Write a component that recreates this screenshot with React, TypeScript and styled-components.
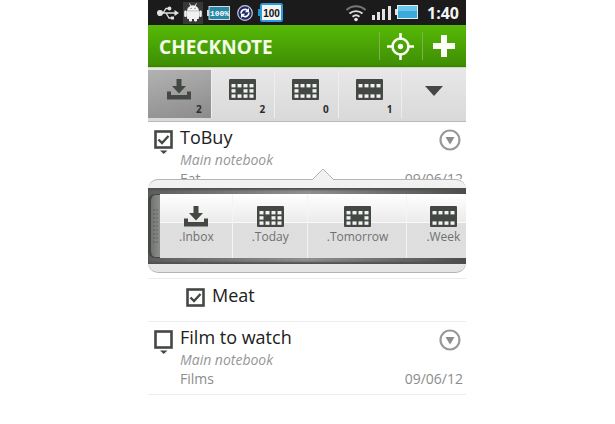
import React from 'react';
import styled, { createGlobalStyle } from 'styled-components';

const GlobalStyle = createGlobalStyle`
  * { box-sizing: border-box; }
  body { margin: 0; background: #fff; font-family: "Open Sans", "Noto Sans", sans-serif; }
  button { font: inherit; border: 0; padding: 0; background: none; color: inherit; }
  svg { display: block; flex: none; }
`;

const Screen = styled.main`
  margin: 0 149px 0 148px;
`;

const StatusBar = styled.div`
  display: flex;
  align-items: center;
  justify-content: space-between;
  height: 25px;
  padding: 0 7px 0 9px;
  background: #1b1b1b;
`;

const StatusGroup = styled.div<{ $gap: number }>`
  display: flex;
  align-items: center;
  gap: ${(p) => p.$gap}px;
`;

const Clock = styled.time`
  margin-left: 4px;
  font-size: 16px;
  line-height: 24px;
  font-weight: 700;
  color: #f4f4f4;
`;

const Header = styled.header`
  display: flex;
  align-items: center;
  height: 43px;
  padding: 0 8px 0 11px;
  background: linear-gradient(#57b906, #3f8f04 40px, #39780c);
  border-bottom: 1px solid #c4e2a8;
`;

const AppTitle = styled.h1`
  flex: 1;
  margin: 0;
  padding-top: 2px;
  font-family: "Noto Sans", "Open Sans", sans-serif;
  font-size: 19px;
  line-height: 24px;
  font-weight: 700;
  color: #f4fbe9;
`;

const HeaderButton = styled.button`
  display: flex;
  align-items: center;
  justify-content: flex-end;
  width: 43px;
  height: 28px;
  padding-right: 8px;
  border-left: 1px solid #7fb152;

  &:last-child {
    width: 36px;
    padding-right: 3px;
  }
`;

const TabBar = styled.nav`
  display: grid;
  grid-template-columns: repeat(5, 1fr);
  height: 54px;
  padding: 2px 0 3px;
  background: linear-gradient(#e9e7e9, #d9d9d9);
  border-bottom: 1px solid #bdb9bb;
`;

const Tab = styled.button<{ $active?: boolean }>`
  display: flex;
  flex-direction: column;
  align-items: center;
  justify-content: space-between;
  padding: 9px 9px 1px 8px;
  border-right: 1px solid #efedef;
  background: ${(p) => (p.$active ? 'linear-gradient(165deg, #b2b2b2, #8b8b8b)' : 'none')};

  &:last-child {
    padding-top: 16px;
    padding-right: 8px;
    border-right: 0;
  }
`;

const Count = styled.span`
  align-self: flex-end;
  font-size: 10px;
  line-height: 16px;
  font-weight: 700;
  color: #2c2c2c;
`;

const Note = styled.article<{ $clipped?: boolean }>`
  display: flex;
  height: ${(p) => (p.$clipped ? '57px' : '73px')};
  overflow: hidden;
  padding: 3px 3px 0 6px;
  border-bottom: ${(p) => (p.$clipped ? '0' : '1px solid #ececec')};
`;

const CheckLabel = styled.label`
  position: relative;
  width: 20px;
  height: 26px;
  margin-top: 5px;
`;

const CheckInput = styled.input`
  position: absolute;
  inset: 0;
  width: 20px;
  height: 20px;
  margin: 0;
  opacity: 0;
`;

const NoteBody = styled.div`
  flex: 1;
  min-width: 0;
  margin-left: 6px;
`;

const NoteTop = styled.div`
  display: flex;
  justify-content: space-between;
  align-items: flex-start;
  height: 25px;
`;

const NoteTitle = styled.h2`
  margin: 0;
  font-size: 18px;
  line-height: 24px;
  font-weight: 400;
  color: #202020;
`;

const Notebook = styled.p`
  margin: 0;
  font-size: 14px;
  line-height: 20px;
  font-style: italic;
  color: #979797;
`;

const NoteMeta = styled.div`
  display: flex;
  justify-content: space-between;
  font-size: 14px;
  line-height: 18px;
  color: #8c8c8c;
`;

const MoreButton = styled.button`
  height: 22px;
  margin: 4px 2px 0 0;
`;

const SubNote = styled.div`
  display: flex;
  gap: 6px;
  height: 43px;
  padding: 4px 0 0 38px;
  border-bottom: 1px solid #ececec;
`;

const Popup = styled.section`
  position: relative;
  height: 94px;
  padding: 8px 0;
  border: 1px solid #b4b4b4;
  border-width: 1px 0;
  border-radius: 10px;
  background: linear-gradient(#f2f2f2, #e4e4e4);
`;

const PopupArrow = styled.svg`
  position: absolute;
  top: -12px;
  left: 164px;
`;

const Drawer = styled.div`
  display: flex;
  height: 76px;
  padding: 6px 0;
  overflow: hidden;
  background: linear-gradient(90deg, #5c5f5c, #8f918f 50%, #4b4d4b);
  box-shadow: inset 0 2px 2px #4e514e, inset 0 -2px 2px #4e514e;
`;

const Handle = styled.button`
  flex: none;
  display: flex;
  align-items: center;
  justify-content: center;
  width: 12px;
  border: 1px solid #444744;
  border-left-width: 3px;
  border-right: 0;
  border-radius: 7px 0 0 7px;
  background: linear-gradient(90deg, #707370, #8c8f8c);
`;

const Tile = styled.button`
  flex: none;
  display: flex;
  flex-direction: column;
  align-items: center;
  gap: 1px;
  padding: 12px 18px 0 19px;
  border-right: 1px solid #f4f4f4;
  font-size: 12px;
  line-height: 18px;
  color: #707070;
  background: linear-gradient(#fff, #ebebeb 28px, #fafafa 28px, #fafafa 29px, #dedede 29px, #dfdfdf);
`;

const Gap = styled.div`
  height: 6px;
  border-bottom: 1px solid #ececec;
`;

const INK = '#444844';

function InboxIcon() {
  return (
    <svg width="24" height="21" viewBox="0 0 24 21" fill={INK} aria-hidden="true">
      <path d="M9.500 0h5v7h4.500L12 14.500 5 7h4.500z" />
      <path d="M0 12.500h4V16h16v-3.500h4V20.500H0z" />
    </svg>
  );
}

const CELLS = {
  today: [[0, 0], [1, 0], [2, 0], [3, 0], [0, 1], [2, 1], [3, 1], [0, 2], [1, 2], [2, 2], [3, 2]],
  tomorrow: [[0, 0], [1, 0], [2, 0], [3, 0], [0, 1], [3, 1], [0, 2], [1, 2], [2, 2], [3, 2]],
  week: [[0, 0], [1, 0], [2, 0], [3, 0], [0, 2], [1, 2], [2, 2], [3, 2]],
};

function CalendarIcon({ kind }: { kind: keyof typeof CELLS }) {
  return (
    <svg width="27" height="21" viewBox="0 0 27 21" aria-hidden="true">
      <rect width="27" height="21" rx="1" fill={INK} />
      {CELLS[kind].map(([x, y]) => (
        <rect key={`${x}-${y}`} x={2.5 + x * 6} y={5 + y * 5.2} width="4" height="3.4" fill="#f2f2f2" />
      ))}
    </svg>
  );
}

function StatusIcons() {
  return (
    <StatusGroup $gap={4}>
      <svg width="22" height="16" viewBox="0 0 22 16" fill="none" stroke="#e2e2e2" strokeWidth="1.3" aria-hidden="true">
        <path d="M3 8h15M6 8l3-4.500h3M9 8l3 5h3" />
        <circle cx="3" cy="8" r="2.400" fill="#e2e2e2" />
        <circle cx="12.500" cy="3.500" r="1.300" fill="#e2e2e2" />
        <path d="M17.500 5v6l4.500-3zM14 11.500h3v3h-3z" fill="#e2e2e2" stroke="none" />
      </svg>
      <svg width="20" height="22" viewBox="0 0 20 22" aria-hidden="true">
        <rect width="20" height="22" fill="#383838" />
        <g fill="#f1f1f1">
          <path d="M4 8.800a6 5.500 0 0 1 12 0v7.200a1 1 0 0 1-1 1H5a1 1 0 0 1-1-1z" />
          <rect x="1.200" y="8.500" width="2.600" height="6.500" rx="1.200" />
          <rect x="16.200" y="8.500" width="2.600" height="6.500" rx="1.200" />
          <rect x="6" y="15" width="3" height="4.500" rx="1.200" />
          <rect x="11" y="15" width="3" height="4.500" rx="1.200" />
        </g>
        <path d="M6.500 1.500l1.500 2.500M13.500 1.500L12 4" stroke="#f1f1f1" />
        <path d="M4 8.900h12" stroke="#a8a8a8" strokeWidth=".7" />
        <circle cx="8" cy="6.300" r=".6" fill="#555" />
        <circle cx="12" cy="6.300" r=".6" fill="#555" />
      </svg>
      <svg width="23" height="16" viewBox="0 0 23 16">
        <path d="M0 5h2v6H0z" fill="#c8d8dc" />
        <rect x="2" y="1.500" width="20.500" height="13" fill="#2789a8" stroke="#d4dadc" />
        <text x="12.500" y="11" textAnchor="middle" fontFamily="Liberation Mono, monospace" fontWeight="700" fontSize="8" fill="#fff">100%</text>
      </svg>
      <svg width="20" height="16" viewBox="0 0 20 16" aria-hidden="true">
        <circle cx="11" cy="8" r="7.300" fill="#20286a" stroke="#c7c9dc" strokeWidth="1.200" />
        <path d="M7 8.500a4 4 0 0 1 6.500-3.200M15 7.500a4 4 0 0 1-6.500 3.200" fill="none" stroke="#fff" strokeWidth="1.700" />
        <path d="M15 3v4.200h-4.200zM7 13V8.800h4.200z" fill="#fff" />
      </svg>
      <svg width="25" height="19" viewBox="0 0 25 19">
        <path d="M0 6h3v7H0z" fill="#2496d8" />
        <rect x="3" y="1" width="21" height="17" rx="1.500" fill="#f4f4f4" stroke="#2b9be0" strokeWidth="2" />
        <text x="13.500" y="13.500" textAnchor="middle" fontFamily="Liberation Sans, sans-serif" fontWeight="700" fontSize="10" fill="#111">100</text>
      </svg>
    </StatusGroup>
  );
}

function SignalIcons() {
  return (
    <StatusGroup $gap={5}>
      <svg width="22" height="18" viewBox="0 0 22 18" fill="none" strokeWidth="1.900" aria-hidden="true">
        <path d="M1.500 6a14 14 0 0 1 19 0" stroke="#777" />
        <path d="M4.500 9.500a10 10 0 0 1 13 0M7.500 12.800a5.500 5.500 0 0 1 7 0" stroke="#e0e0e0" />
        <circle cx="11" cy="15.500" r="1.800" fill="#e8e8e8" />
      </svg>
      <svg width="46" height="16" viewBox="0 0 46 16" aria-hidden="true">
        <path d="M0 10h3v5H0zM5 7h3v8H5zM10 4h3v11h-3zM16 1h3v14h-3z" fill="#e2e2e2" />
        <path d="M23 4h3v6h-3z" fill="#e2e2e2" />
        <rect x="25.500" y=".5" width="20" height="13" fill="#3aa9dc" stroke="#e4eef2" />
        <path d="M26 1h19v5H26z" fill="#6cc6ec" />
      </svg>
      <Clock>1:40</Clock>
    </StatusGroup>
  );
}

function CheckBox({ label, checked, pointer }: { label: string; checked?: boolean; pointer?: boolean }) {
  return (
    <CheckLabel>
      <CheckInput type="checkbox" defaultChecked={checked} aria-label={label} />
      <svg width="20" height="26" viewBox="0 0 20 26" fill="none" aria-hidden="true">
        <rect x="1.500" y="1.500" width="16" height="16" stroke={INK} strokeWidth="2.600" />
        {checked && <path d="M4.500 9.500l3.500 3.500L14.500 6" stroke={INK} strokeWidth="2.400" />}
        {pointer && <path d="M6 20.500h7.500L9.700 24z" fill={INK} />}
      </svg>
    </CheckLabel>
  );
}

interface NoteProps {
  title: string;
  text: string;
  checked?: boolean;
  clipped?: boolean;
}

function NoteRow({ title, text, checked, clipped }: NoteProps) {
  return (
    <Note $clipped={clipped}>
      <CheckBox label={title} checked={checked} pointer />
      <NoteBody>
        <NoteTop>
          <NoteTitle>{title}</NoteTitle>
          <MoreButton aria-label={`More about ${title}`}>
            <svg width="22" height="22" viewBox="0 0 22 22" aria-hidden="true">
              <circle cx="11" cy="11" r="9.500" fill="none" stroke="#999" strokeWidth="2.200" />
              <path d="M6.500 8h9L11 15.500z" fill="#8c8c8c" />
            </svg>
          </MoreButton>
        </NoteTop>
        <Notebook>Main notebook</Notebook>
        <NoteMeta>
          <span>{text}</span>
          <time>09/06/12</time>
        </NoteMeta>
      </NoteBody>
    </Note>
  );
}

export default function App() {
  return (
    <>
      <GlobalStyle />
      <Screen>
        <StatusBar>
          <StatusIcons />
          <SignalIcons />
        </StatusBar>
        <Header>
          <AppTitle>CHECKNOTE</AppTitle>
          <HeaderButton aria-label="Locate">
            <svg width="27" height="27" viewBox="0 0 27 27" fill="none" stroke="#fbfff5" strokeWidth="2.600" aria-hidden="true">
              <circle cx="13.500" cy="13.500" r="8" />
              <path d="M13.500 0v7M13.500 20v7M0 13.500h7M20 13.500h7" />
              <circle cx="13.500" cy="13.500" r="2.700" fill="#fbfff5" stroke="none" />
            </svg>
          </HeaderButton>
          <HeaderButton aria-label="Add note">
            <svg width="22" height="22" viewBox="0 0 22 22" aria-hidden="true">
              <path d="M8 0h6v8h8v6h-8v8H8v-8H0V8h8z" fill="#fbfff5" />
            </svg>
          </HeaderButton>
        </Header>
        <TabBar>
          <Tab $active aria-label="Inbox"><InboxIcon /><Count>2</Count></Tab>
          <Tab aria-label="Today"><CalendarIcon kind="today" /><Count>2</Count></Tab>
          <Tab aria-label="Tomorrow"><CalendarIcon kind="tomorrow" /><Count>0</Count></Tab>
          <Tab aria-label="Week"><CalendarIcon kind="week" /><Count>1</Count></Tab>
          <Tab aria-label="More lists">
            <svg width="18" height="10" viewBox="0 0 18 10" aria-hidden="true">
              <path d="M0 0h18L9 10z" fill={INK} />
            </svg>
          </Tab>
        </TabBar>
        <NoteRow title="ToBuy" text="Eat" checked clipped />
        <Popup>
          <PopupArrow width="22" height="13" viewBox="0 0 22 13" aria-hidden="true">
            <path d="M0 13v-1L11 1l11 11v1z" fill="#f2f2f2" />
            <path d="M0 12L11 1l11 11" fill="none" stroke="#b4b4b4" />
          </PopupArrow>
          <Drawer>
            <Handle aria-label="Drag handle">
              <svg width="5" height="34" viewBox="0 0 5 34" aria-hidden="true">
                {[1, 5, 9, 13, 17, 21, 25, 29, 33].map((y) => (
                  <path key={y} d={`M0 ${y}h2M3 ${y}h2`} stroke="#5c5f5c" />
                ))}
              </svg>
            </Handle>
            <Tile><InboxIcon />.Inbox</Tile>
            <Tile><CalendarIcon kind="today" />.Today</Tile>
            <Tile><CalendarIcon kind="tomorrow" />.Tomorrow</Tile>
            <Tile><CalendarIcon kind="week" />.Week</Tile>
          </Drawer>
        </Popup>
        <Gap />
        <SubNote>
          <CheckBox label="Meat" checked />
          <NoteTitle>Meat</NoteTitle>
        </SubNote>
        <NoteRow title="Film to watch" text="Films" />
      </Screen>
    </>
  );
}
